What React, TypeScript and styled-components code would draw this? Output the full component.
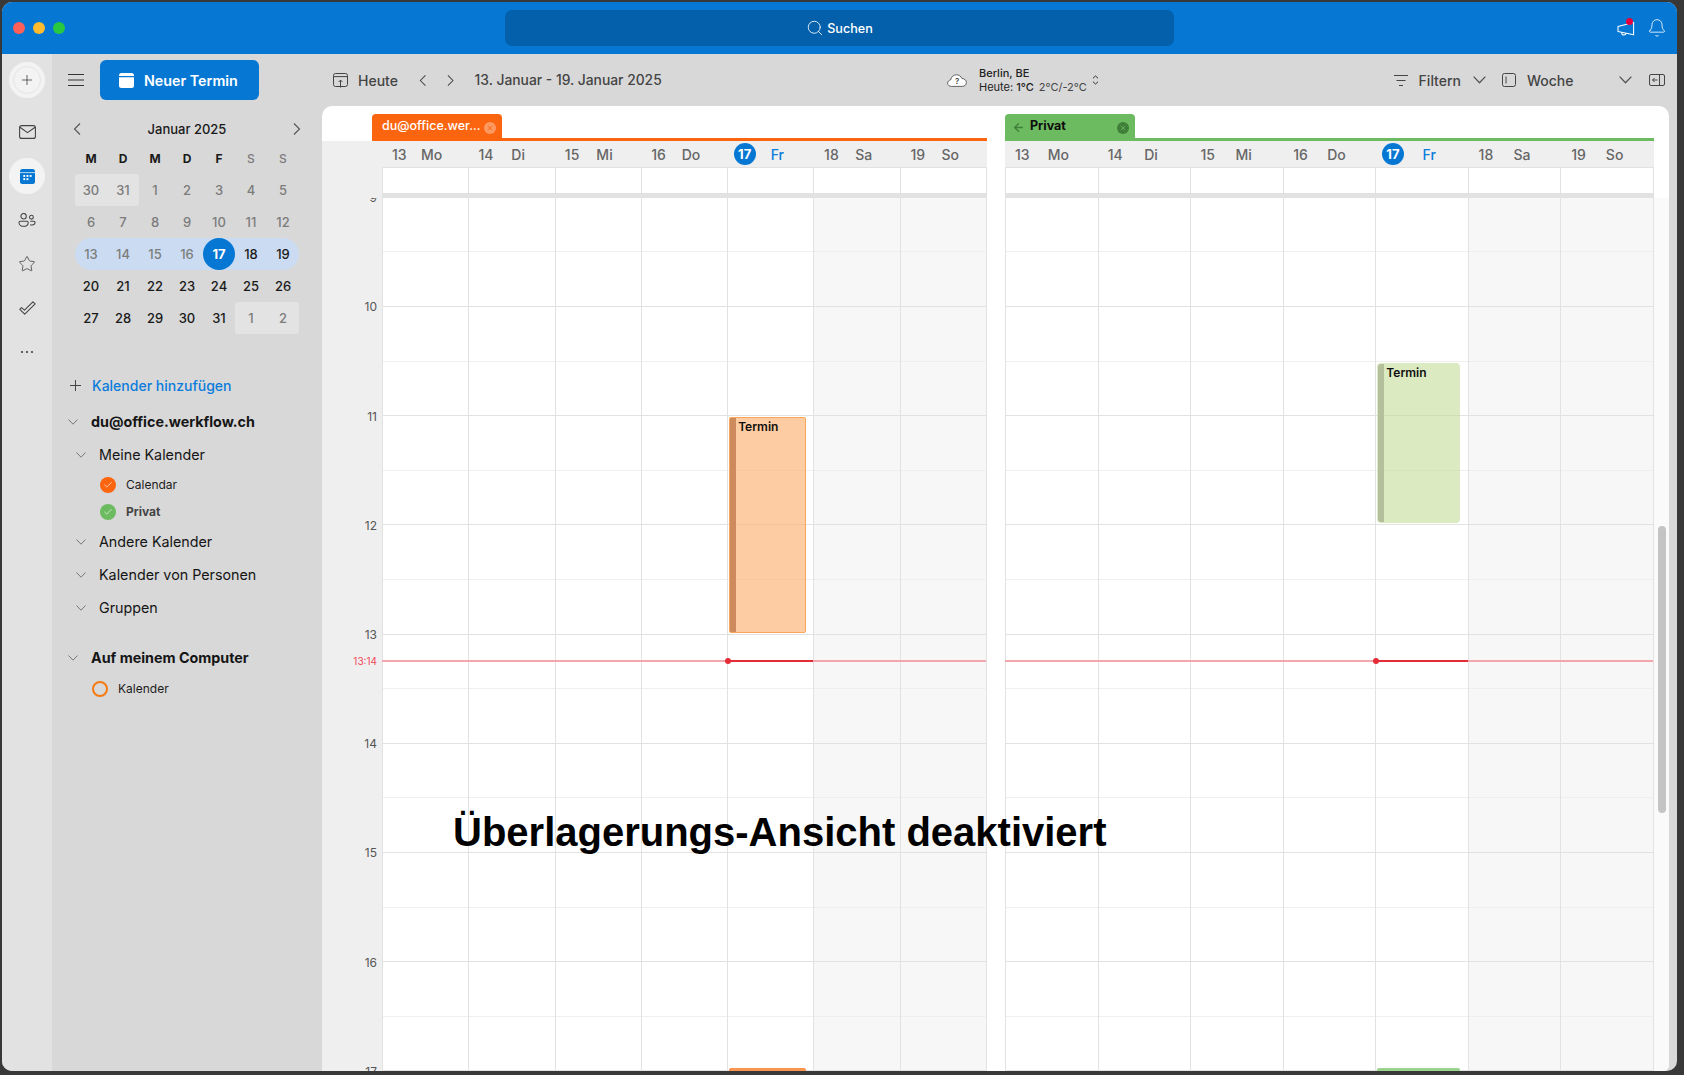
import { Bell, Check, Plus, Search, Star, X, ArrowLeft } from 'lucide-react'
import styled, { createGlobalStyle } from 'styled-components'

const GlobalStyle = createGlobalStyle`
  html, body {
    margin: 0;
    height: 100%;
    background: #383838;
    overflow: hidden;
  }
  body {
    font-family: Inter, "Liberation Sans", sans-serif;
    -webkit-font-smoothing: antialiased;
  }
  * {
    box-sizing: border-box;
  }
`

const Window = styled.div`
  position: relative;
  margin: 2px 0 0 2px;
  width: 1675px;
  height: 1069px;
  border-radius: 10px;
  overflow: hidden;
  display: flex;
  flex-direction: column;
  background: #d8d8d8;
`

const TitleBar = styled.header`
  height: 52px;
  flex-shrink: 0;
  background: #0678d4;
  display: grid;
  grid-template-columns: 503px 669px 1fr;
  align-items: center;
`

const TrafficLights = styled.div`
  display: flex;
  gap: 8px;
  padding-left: 11px;
`

const TrafficDot = styled.span<{ $color: string }>`
  width: 12px;
  height: 12px;
  border-radius: 50%;
  background: ${p => p.$color};
`

const SearchBox = styled.div`
  height: 36px;
  border-radius: 7px;
  background: #0460ab;
  color: #fff;
  display: flex;
  align-items: center;
  justify-content: center;
  gap: 3px;
  font-size: 12.6px;
  font-weight: 500;
`

const TitleActions = styled.div`
  display: flex;
  justify-content: flex-end;
  align-items: center;
  gap: 12px;
  padding-right: 10px;
  color: #fff;
`

const Megaphone = styled.div`
  position: relative;
  width: 18px;
  height: 16px;
  margin-top: 2px;
`

const RedDot = styled.span`
  position: absolute;
  right: 2px;
  top: -3px;
  width: 7px;
  height: 7px;
  border-radius: 50%;
  background: #e8003e;
`

const Body = styled.div`
  flex: 1;
  min-height: 0;
  display: flex;
`

const Rail = styled.nav`
  width: 50px;
  flex-shrink: 0;
  background: #e2e2e2;
  display: flex;
  flex-direction: column;
  align-items: center;
  padding-top: 8px;
  color: #444;
`

const AddButton = styled.div`
  width: 36px;
  height: 36px;
  margin-bottom: 12px;
  border-radius: 50%;
  background: #f3f3f3;
  display: flex;
  align-items: center;
  justify-content: center;
`

const AddInner = styled.div`
  width: 28px;
  height: 28px;
  border-radius: 50%;
  border: 1px solid #e4e4e4;
  display: flex;
  align-items: center;
  justify-content: center;
  color: #333;
`

const RailItem = styled.div<{ $active?: boolean }>`
  width: 44px;
  height: 44px;
  display: flex;
  align-items: center;
  justify-content: center;
  position: relative;

  &::before {
    content: '';
    position: absolute;
    left: 4px;
    top: 4px;
    width: 36px;
    height: 36px;
    border-radius: 50%;
    background: ${p => (p.$active ? '#f3f3f3' : 'transparent')};
  }

  svg {
    position: relative;
  }
`

const Sidebar = styled.aside`
  width: 270px;
  flex-shrink: 0;
  background: #d8d8d8;
`

const SidebarHead = styled.div`
  height: 52px;
  display: flex;
  align-items: center;
  padding: 0 0 0 16px;
  gap: 16px;
  color: #333;
`

const NewButton = styled.div`
  width: 159px;
  height: 40px;
  border-radius: 6px;
  background: #0678d4;
  color: #fff;
  display: flex;
  align-items: center;
  padding-left: 19px;
  gap: 10px;
  font-size: 14.3px;
  font-weight: 600;
`

const MiniCalendar = styled.div`
  margin: 9px 0 0 23px;
  width: 224px;
`

const MonthRow = styled.div`
  height: 27px;
  display: flex;
  align-items: center;
  justify-content: space-between;
  color: #555;
  margin: 0 -2px;
`

const MonthTitle = styled.span`
  font-size: 13px;
  font-weight: 500;
  color: #1a1a1a;
`

const MiniGrid = styled.div`
  display: grid;
  grid-template-columns: repeat(7, 32px);
  grid-auto-rows: 32px;
`

const WeekLetter = styled.div<{ $weekend?: boolean }>`
  display: flex;
  align-items: center;
  justify-content: center;
  font-size: 12px;
  font-weight: ${p => (p.$weekend ? 500 : 700)};
  color: ${p => (p.$weekend ? '#7b7b7b' : '#1a1a1a')};
`

const MiniDay = styled.div<{ $muted?: boolean; $fill?: string; $capStart?: number; $capEnd?: number }>`
  display: flex;
  align-items: center;
  justify-content: center;
  font-size: 13px;
  font-weight: 500;
  color: ${p => (p.$muted ? '#7c7c7c' : '#1a1a1a')};
  background: ${p => p.$fill || 'transparent'};
  border-radius: ${p => `${p.$capStart || 0}px ${p.$capEnd || 0}px ${p.$capEnd || 0}px ${p.$capStart || 0}px`};
`

const TodayDot = styled.span`
  width: 32px;
  height: 32px;
  border-radius: 50%;
  background: #0678d4;
  color: #fff;
  font-weight: 700;
  display: flex;
  align-items: center;
  justify-content: center;
`

const AddCalendar = styled.div`
  height: 32px;
  margin-top: 35px;
  padding-left: 18px;
  display: flex;
  align-items: center;
  gap: 11px;
  color: #444;
`

const AddLabel = styled.span`
  color: #0a7cdc;
  font-size: 14px;
  font-weight: 500;
`

const AccountRow = styled.div<{ $gapTop: number }>`
  height: 33px;
  margin-top: ${p => p.$gapTop}px;
  padding-left: 16px;
  display: flex;
  align-items: center;
  gap: 13px;
  font-size: 14.3px;
  font-weight: 700;
  color: #151515;

  svg {
    color: #777;
  }
`

const GroupRow = styled.div`
  height: 33px;
  padding-left: 24px;
  display: flex;
  align-items: center;
  gap: 13px;
  font-size: 14.3px;
  color: #151515;

  svg {
    color: #777;
  }
`

const CalendarRow = styled.div<{ $indent: number; $bold?: boolean; $gapTop?: number }>`
  height: 27px;
  margin-top: ${p => p.$gapTop || 0}px;
  padding-left: ${p => p.$indent}px;
  display: flex;
  align-items: center;
  gap: 10px;
  font-size: 12px;
  font-weight: ${p => (p.$bold ? 700 : 400)};
  color: ${p => (p.$bold ? '#444' : '#1c1c1c')};
`

const CheckDot = styled.span<{ $color: string }>`
  width: 16px;
  height: 16px;
  border-radius: 50%;
  background: ${p => p.$color};
  color: #fff;
  display: flex;
  align-items: center;
  justify-content: center;
`

const RingDot = styled.span`
  width: 16px;
  height: 16px;
  border-radius: 50%;
  border: 2px solid #f57a12;
`

const Content = styled.main`
  flex: 1;
  min-width: 0;
  display: flex;
  flex-direction: column;
`

const Toolbar = styled.div`
  height: 52px;
  flex-shrink: 0;
  display: flex;
  align-items: center;
  color: #444;
  font-size: 14px;
  font-weight: 500;
`

const ToolbarLeft = styled.div`
  width: 625px;
  padding-left: 11px;
  display: flex;
  align-items: center;
`

const ToolLabel = styled.span<{ $left?: number; $width?: number }>`
  margin-left: ${p => p.$left || 0}px;
  ${p => (p.$width ? `width: ${p.$width}px;` : '')}
`

const DateRange = styled.span`
  font-size: 13.85px;
`

const NavArrows = styled.div`
  display: flex;
  gap: 21px;
  margin: 0 20px 0 21px;
  color: #444;
`

const Weather = styled.div`
  display: flex;
  align-items: center;
`

const WeatherText = styled.div`
  margin: 0 5px 0 12px;
  font-size: 11px;
  line-height: 14px;
  color: #222;
  font-weight: 500;
`

const WeatherLine = styled.span`
  font-weight: 400;
`

const WeatherNow = styled.b`
  font-weight: 500;
`

const WeatherRange = styled.span`
  margin-left: 5px;
  color: #444;
  font-weight: 400;
`

const ToolbarRight = styled.div`
  margin-left: auto;
  padding-right: 12px;
  display: flex;
  align-items: center;
`

const ToolChevron = styled.span<{ $left: number }>`
  display: flex;
  margin-left: ${p => p.$left}px;
  color: #555;
`

const ToolIcon = styled.span<{ $left?: number }>`
  display: flex;
  margin-left: ${p => p.$left || 0}px;
`

const Panel = styled.section`
  position: relative;
  flex: 1;
  min-height: 0;
  margin-right: 8px;
  background: #fff;
  border-radius: 10px 10px 6px 0;
  overflow: hidden;
  display: flex;
`

const Gutter = styled.div`
  width: 60px;
  flex-shrink: 0;
  margin-top: 35px;
  background: #efefef;
  display: flex;
  flex-direction: column;
`

const GutterHead = styled.div`
  height: 57px;
  flex-shrink: 0;
`

const GutterScale = styled.div`
  position: relative;
  flex: 1;
  overflow: hidden;
`

const HourStack = styled.div`
  margin-top: -54.8px;
`

const HourLabel = styled.div`
  height: 109.2px;
  display: flex;
  align-items: center;
  justify-content: flex-end;
  padding-right: 5px;
  font-size: 12px;
  color: #555;
`

const NowLabel = styled.span`
  position: absolute;
  right: 5px;
  top: 456px;
  font-size: 10px;
  line-height: 14px;
  color: #ef4a5a;
`

const Pane = styled.div<{ $width: number; $gap?: number }>`
  width: ${p => p.$width}px;
  flex-shrink: 0;
  margin-left: ${p => p.$gap || 0}px;
  display: flex;
  flex-direction: column;
  min-height: 0;
`

const TabLine = styled.div<{ $color: string; $outdent?: number }>`
  height: 35px;
  flex-shrink: 0;
  margin-left: ${p => -(p.$outdent || 0)}px;
  border-bottom: 3px solid ${p => p.$color};
  display: flex;
  align-items: flex-end;
`

const Tab = styled.div<{ $color: string; $dark?: boolean }>`
  width: 130px;
  height: 27px;
  margin-bottom: -3px;
  border-radius: 4px 4px 0 0;
  background: ${p => p.$color};
  color: ${p => (p.$dark ? '#0d0d0d' : '#fff')};
  display: flex;
  align-items: center;
  padding: 0 6px 4px ${p => (p.$dark ? '7px' : '10px')};
  font-size: 12.5px;
  font-weight: ${p => (p.$dark ? 700 : 500)};
`

const TabTitle = styled.span`
  flex: 1;
  white-space: nowrap;
`

const TabClose = styled.span<{ $color: string; $ink: string }>`
  width: 12px;
  height: 12px;
  margin-top: 5px;
  border-radius: 50%;
  background: ${p => p.$color};
  color: ${p => p.$ink};
  display: flex;
  align-items: center;
  justify-content: center;
`

const BackArrow = styled.span`
  display: flex;
  margin-right: 5px;
  margin-top: 4px;
  color: #3f7f39;
`

const DayHeaders = styled.div`
  height: 27px;
  flex-shrink: 0;
  background: #efefef;
  border-bottom: 1px solid #e2e2e2;
  display: flex;
`

const DayHeader = styled.div`
  flex: 1 1 0;
  display: grid;
  grid-template-columns: 40% 35%;
  align-items: center;
  font-size: 14px;
  font-weight: 500;
  color: #666;
`

const DayNumber = styled.span`
  padding-left: 10px;
`

const DayName = styled.span<{ $today?: boolean }>`
  text-align: center;
  color: ${p => (p.$today ? '#0a7cdc' : '#666')};
`

const TodayBadge = styled.span`
  width: 22px;
  height: 22px;
  margin-left: 6px;
  border-radius: 50%;
  background: #0678d4;
  color: #fff;
  font-size: 13px;
  font-weight: 700;
  display: flex;
  align-items: center;
  justify-content: center;
`

const AllDayRow = styled.div`
  height: 25px;
  flex-shrink: 0;
  display: flex;
  border-right: 1px solid #e2e2e2;
`

const AllDayCell = styled.div`
  flex: 1 1 0;
  border-left: 1px solid #e2e2e2;
`

const AllDayDivider = styled.div`
  height: 5px;
  flex-shrink: 0;
  background: #e2e2e2;
`

const Grid = styled.div`
  position: relative;
  flex: 1;
  min-height: 0;
  overflow: hidden;
  display: flex;
  border-right: 1px solid #e2e2e2;
`

const DayColumn = styled.div<{ $weekend?: boolean }>`
  position: relative;
  flex: 1 1 0;
  background: ${p => (p.$weekend ? '#f7f7f7' : '#fff')};
  border-left: 1px solid #e2e2e2;
`

const Slot = styled.div<{ $hour: boolean; $first?: boolean }>`
  height: ${p => (p.$first ? '54.4px' : '54.6px')};
  border-bottom: 1px solid ${p => (p.$hour ? '#e2e2e2' : '#efefef')};
`

const NowLine = styled.div`
  position: absolute;
  left: 0;
  right: 0;
  top: 462px;
  height: 2px;
  background: #f2a7ae;
  z-index: 1;
`

const NowSegment = styled.div`
  position: absolute;
  left: 0;
  right: 0;
  top: 462px;
  height: 2px;
  background: #e42c39;
  z-index: 3;

  &::before {
    content: '';
    position: absolute;
    left: -3px;
    top: -2px;
    width: 6px;
    height: 6px;
    border-radius: 50%;
    background: #e42c39;
  }
`

const EventCard = styled.div<{ $top: number; $height: number; $width: number; $tone: 'orange' | 'green' }>`
  position: absolute;
  z-index: 2;
  left: 1px;
  top: ${p => p.$top}px;
  width: ${p => p.$width}px;
  height: ${p => p.$height}px;
  border-radius: ${p => (p.$tone === 'orange' ? '2px' : '4px')};
  overflow: hidden;
  background: ${p => (p.$tone === 'orange' ? 'rgba(252, 177, 112, 0.65)' : 'rgba(195, 220, 150, 0.6)')};
  border: 1px solid ${p => (p.$tone === 'orange' ? '#f9a65c' : 'transparent')};
  display: flex;
  font-size: 12px;
  font-weight: 600;
  color: #0f0f0f;
`

const EventStripe = styled.span<{ $tone: 'orange' | 'green' }>`
  width: 6px;
  flex-shrink: 0;
  background: ${p => (p.$tone === 'orange' ? '#cd8a5c' : '#b4c09b')};
`

const EventTitle = styled.span`
  padding: 1px 0 0 2px;
`

const EventStub = styled.div<{ $width: number; $color: string }>`
  position: absolute;
  z-index: 2;
  left: 1px;
  top: 870px;
  width: ${p => p.$width}px;
  height: 10px;
  background: ${p => p.$color};
  border-radius: 2px 2px 0 0;
`

const ScrollArea = styled.div`
  flex: 1;
  margin-top: 92px;
  background: #fafafa;
  padding: 328px 3px 0 4px;
`

const ScrollThumb = styled.div`
  height: 287px;
  border-radius: 4px;
  background: #c4c4c4;
`

const Caption = styled.div`
  position: absolute;
  z-index: 5;
  left: 131px;
  top: 702px;
  font-family: "Liberation Sans", Arial, sans-serif;
  font-size: 40px;
  line-height: 48px;
  font-weight: 700;
  color: #000;
  white-space: nowrap;
`

const weekLetters = ['M', 'D', 'M', 'D', 'F', 'S', 'S']

const weekDays = [
  { num: 13, name: 'Mo' },
  { num: 14, name: 'Di' },
  { num: 15, name: 'Mi' },
  { num: 16, name: 'Do' },
  { num: 17, name: 'Fr', today: true },
  { num: 18, name: 'Sa' },
  { num: 19, name: 'So' }
]

const hours = [9, 10, 11, 12, 13, 14, 15, 16, 17]

interface MiniCell {
  day: number
  muted?: boolean
  fill?: string
  capStart?: number
  capEnd?: number
  today?: boolean
}

const BOX = '#e3e3e3'
const RANGE = '#cbdcf2'

const miniDays: MiniCell[] = [
  { day: 30, muted: true, fill: BOX, capStart: 3 },
  { day: 31, muted: true, fill: BOX, capEnd: 3 },
  ...[1, 2, 3, 4, 5, 6, 7, 8, 9, 10, 11, 12].map(day => ({ day, muted: true })),
  { day: 13, muted: true, fill: RANGE, capStart: 16 },
  { day: 14, muted: true, fill: RANGE },
  { day: 15, muted: true, fill: RANGE },
  { day: 16, muted: true, fill: RANGE },
  { day: 17, fill: RANGE, today: true },
  { day: 18, fill: RANGE },
  { day: 19, fill: RANGE, capEnd: 16 },
  ...[20, 21, 22, 23, 24, 25, 26, 27, 28, 29, 30, 31].map(day => ({ day })),
  { day: 1, muted: true, fill: BOX, capStart: 3 },
  { day: 2, muted: true, fill: BOX, capEnd: 3 }
]

const slots = Array.from({ length: 16 }, (_, i) => i)

const MenuIcon = () => (
  <svg width="16" height="12" viewBox="0 0 16 12" fill="none" stroke="currentColor" strokeWidth="1">
    <path d="M0 .5h16M0 6h16M0 11.500h16" />
  </svg>
)

const MailIcon = () => (
  <svg width="17" height="14" viewBox="0 0 17 14" fill="none" stroke="currentColor" strokeWidth="1.1">
    <rect x=".6" y=".6" width="15.8" height="12.800" rx="2" />
    <path d="M.9 2.200 8.500 7.600l7.600-5.400" />
  </svg>
)

const CalendarActiveIcon = () => (
  <svg width="15" height="15" viewBox="0 0 15 15">
    <rect width="15" height="15" rx="2.500" fill="#0678d4" />
    <path d="M0 3.600h15" stroke="#fff" strokeWidth=".7" />
    <g fill="#fff">
      <rect x="3.300" y="6" width="1.900" height="1.900" />
      <rect x="6.500" y="6" width="1.900" height="1.900" />
      <rect x="9.700" y="6" width="1.900" height="1.900" />
      <rect x="3.300" y="9.200" width="1.900" height="1.900" />
      <rect x="6.500" y="9.200" width="1.900" height="1.900" />
    </g>
  </svg>
)

const PeopleIcon = () => (
  <svg width="18" height="14" viewBox="0 0 18 14" fill="none" stroke="currentColor" strokeWidth="1.05">
    <circle cx="5.600" cy="3.200" r="2.700" />
    <circle cx="13.400" cy="4.200" r="1.900" />
    <path d="M1 9.400c0-.7.600-1.200 1.200-1.200h6.800c.7 0 1.200.5 1.200 1.200 0 2.400-2 3.900-4.600 3.900S1 11.800 1 9.400Z" />
    <path d="M12.200 8.200h3.600c.7 0 1.200.5 1.200 1.100 0 1.700-1.400 2.700-3.200 2.700-.6 0-1.200-.1-1.700-.3" />
  </svg>
)

const TasksIcon = () => (
  <svg width="17" height="14" viewBox="0 0 17 14" fill="none" stroke="currentColor" strokeWidth="1.05" strokeLinejoin="round">
    <path d="M.8 8.400 2.500 6.600l3 2.600L13.900.8l2.300 2.100L5.700 13.200.8 8.400Z" />
  </svg>
)

const DotsIcon = () => (
  <svg width="14" height="4" viewBox="0 0 14 4" fill="currentColor">
    <circle cx="2" cy="2" r="1.100" />
    <circle cx="7" cy="2" r="1.100" />
    <circle cx="12" cy="2" r="1.100" />
  </svg>
)

const NewEventIcon = () => (
  <svg width="15" height="15" viewBox="0 0 15 15" fill="#fff">
    <path d="M2.500 0h10A2.500 2.500 0 0 1 15 2.500V3H0v-.5A2.500 2.500 0 0 1 2.500 0Z" />
    <path d="M0 4.200h15v8.300a2.500 2.500 0 0 1-2.500 2.500h-10A2.500 2.500 0 0 1 0 12.500V4.200Z" />
  </svg>
)

const MegaphoneIcon = () => (
  <svg width="18" height="16" viewBox="0 0 18 16" fill="none" stroke="currentColor" strokeWidth="1.05" strokeLinejoin="round">
    <path d="M1 5.600 16.600 1.400v12.400L1 10.400V5.600Z" />
    <path d="M4.600 11.400c0 1.600 1 2.600 2.300 2.600 1.200 0 2.100-.8 2.300-1.900" />
  </svg>
)

const TodayIcon = () => (
  <svg width="15" height="15" viewBox="0 0 15 15" fill="none" stroke="currentColor" strokeWidth="1">
    <rect x=".5" y=".5" width="14" height="13" rx="2" />
    <path d="M.5 3.600h14M7.500 14.500V7.200M5.600 9l1.900-1.900L9.400 9" />
  </svg>
)

const FilterIcon = () => (
  <svg width="14" height="11" viewBox="0 0 14 11" fill="none" stroke="currentColor" strokeWidth="1">
    <path d="M0 .5h14M2.500 5.500h9M5 10.500h4" />
  </svg>
)

const WeekIcon = () => (
  <svg width="14" height="14" viewBox="0 0 14 14" fill="none" stroke="currentColor" strokeWidth="1">
    <rect x=".5" y=".5" width="13" height="13" rx="2" />
    <path d="M4 3.500v7" />
  </svg>
)

const SidePanelIcon = () => (
  <svg width="16" height="12" viewBox="0 0 16 12" fill="none" stroke="currentColor" strokeWidth="1">
    <rect x=".5" y=".5" width="15" height="11" rx="1.500" />
    <path d="M10.500 .5v11M8.500 6H3.500M5.500 4 3.500 6l2 2" />
  </svg>
)

const CloudIcon = () => (
  <svg width="20" height="13" viewBox="0 0 20 13">
    <path
      d="M4.400 12.400C2.300 12.400.6 11 .6 9.200c0-1.700 1.300-3 3-3.200C4 3.100 6.500.8 9.500.8c2.500 0 4.600 1.500 5.400 3.700 2.500 0 4.500 1.700 4.500 4 0 2.200-1.800 3.900-4.100 3.900H4.400Z"
      fill="#fff"
      stroke="#555"
      strokeWidth=".9"
    />
    <text x="10" y="10" textAnchor="middle" fontSize="8" fill="#333" fontFamily="Inter, sans-serif">
      ?
    </text>
  </svg>
)

const UpDownIcon = () => (
  <svg width="7" height="10" viewBox="0 0 7 10" fill="none" stroke="#333" strokeWidth="1">
    <path d="M1 3.200 3.500 1 6 3.200M1 6.800 3.500 9 6 6.800" />
  </svg>
)

const AddPlusIcon = () => (
  <svg width="11" height="11" viewBox="0 0 11 11" fill="none" stroke="currentColor" strokeWidth="1">
    <path d="M5.500 0v11M0 5.500h11" />
  </svg>
)

const SideChevron = ({ back, size = 12 }: { back?: boolean; size?: number }) => (
  <svg width={(size * 2) / 3} height={size} viewBox="0 0 8 12" fill="none" stroke="currentColor" strokeWidth="1.100">
    <path d={back ? 'M7 .5 1.500 6 7 11.500' : 'M1 .5 6.500 6 1 11.500'} />
  </svg>
)

const DownChevron = ({ width = 10 }: { width?: number }) => (
  <svg width={width} height={width * 0.6} viewBox="0 0 10 6" fill="none" stroke="currentColor" strokeWidth="1">
    <path d="M.5 .5 5 5.200 9.500 .5" />
  </svg>
)

function PaneColumns({ todayEvent, stubWidth, stubColor }: { todayEvent: React.ReactNode; stubWidth: number; stubColor: string }) {
  return (
    <Grid>
      {weekDays.map(d => (
        <DayColumn key={d.num} $weekend={d.num > 17}>
          {slots.map(i => (
            <Slot key={i} $first={i === 0} $hour={i % 2 === 1} />
          ))}
          {d.today && (
            <>
              {todayEvent}
              <EventStub $width={stubWidth} $color={stubColor} />
              <NowSegment />
            </>
          )}
        </DayColumn>
      ))}
      <NowLine />
    </Grid>
  )
}

function PaneHeader() {
  return (
    <>
      <DayHeaders>
        {weekDays.map(d => (
          <DayHeader key={d.num}>
            {d.today ? <TodayBadge>{d.num}</TodayBadge> : <DayNumber>{d.num}</DayNumber>}
            <DayName $today={d.today}>{d.name}</DayName>
          </DayHeader>
        ))}
      </DayHeaders>
      <AllDayRow>
        {weekDays.map(d => (
          <AllDayCell key={d.num} />
        ))}
      </AllDayRow>
      <AllDayDivider />
    </>
  )
}

function App() {
  return (
    <>
      <GlobalStyle />
      <Window>
        <TitleBar>
          <TrafficLights>
            <TrafficDot $color="#fe5f57" />
            <TrafficDot $color="#febc2e" />
            <TrafficDot $color="#28c840" />
          </TrafficLights>
          <SearchBox>
            <Search size={18} strokeWidth={1.1} />
            Suchen
          </SearchBox>
          <TitleActions>
            <Megaphone>
              <MegaphoneIcon />
              <RedDot />
            </Megaphone>
            <Bell size={20} strokeWidth={1} />
          </TitleActions>
        </TitleBar>

        <Body>
          <Rail>
            <AddButton>
              <AddInner>
                <Plus size={16} strokeWidth={1.1} />
              </AddInner>
            </AddButton>
            <RailItem><MailIcon /></RailItem>
            <RailItem $active><CalendarActiveIcon /></RailItem>
            <RailItem><PeopleIcon /></RailItem>
            <RailItem><Star size={18} strokeWidth={1.1} /></RailItem>
            <RailItem><TasksIcon /></RailItem>
            <RailItem><DotsIcon /></RailItem>
          </Rail>

          <Sidebar>
            <SidebarHead>
              <MenuIcon />
              <NewButton>
                <NewEventIcon />
                Neuer Termin
              </NewButton>
            </SidebarHead>

            <MiniCalendar>
              <MonthRow>
                <SideChevron back />
                <MonthTitle>Januar 2025</MonthTitle>
                <SideChevron />
              </MonthRow>
              <MiniGrid>
                {weekLetters.map((l, i) => (
                  <WeekLetter key={i} $weekend={i > 4}>{l}</WeekLetter>
                ))}
                {miniDays.map((c, i) => (
                  <MiniDay key={i} $muted={c.muted} $fill={c.fill} $capStart={c.capStart} $capEnd={c.capEnd}>
                    {c.today ? <TodayDot>{c.day}</TodayDot> : c.day}
                  </MiniDay>
                ))}
              </MiniGrid>
            </MiniCalendar>

            <AddCalendar>
              <AddPlusIcon />
              <AddLabel>Kalender hinzufügen</AddLabel>
            </AddCalendar>

            <AccountRow $gapTop={4}>
              <DownChevron />
              du@office.werkflow.ch
            </AccountRow>
            <GroupRow>
              <DownChevron />
              Meine Kalender
            </GroupRow>
            <CalendarRow $indent={48}>
              <CheckDot $color="#fc650f"><Check size={10} strokeWidth={1.5} /></CheckDot>
              Calendar
            </CalendarRow>
            <CalendarRow $indent={48} $bold>
              <CheckDot $color="#6dbb60"><Check size={10} strokeWidth={1.5} /></CheckDot>
              Privat
            </CalendarRow>
            <GroupRow>
              <DownChevron />
              Andere Kalender
            </GroupRow>
            <GroupRow>
              <DownChevron />
              Kalender von Personen
            </GroupRow>
            <GroupRow>
              <DownChevron />
              Gruppen
            </GroupRow>
            <AccountRow $gapTop={17}>
              <DownChevron />
              Auf meinem Computer
            </AccountRow>
            <CalendarRow $indent={40} $gapTop={1}>
              <RingDot />
              Kalender
            </CalendarRow>
          </Sidebar>

          <Content>
            <Toolbar>
              <ToolbarLeft>
                <TodayIcon />
                <ToolLabel $left={10}>Heute</ToolLabel>
                <NavArrows>
                  <SideChevron back size={11} />
                  <SideChevron size={11} />
                </NavArrows>
                <DateRange>13. Januar - 19. Januar 2025</DateRange>
              </ToolbarLeft>
              <Weather>
                <CloudIcon />
                <WeatherText>
                  Berlin, BE
                  <br />
                  <WeatherLine>Heute: </WeatherLine>
                  <WeatherNow>1°C</WeatherNow>
                  <WeatherRange>2°C/-2°C</WeatherRange>
                </WeatherText>
                <UpDownIcon />
              </Weather>
              <ToolbarRight>
                <FilterIcon />
                <ToolLabel $left={11}>Filtern</ToolLabel>
                <ToolChevron $left={12}><DownChevron width={13} /></ToolChevron>
                <ToolIcon $left={16}><WeekIcon /></ToolIcon>
                <ToolLabel $left={11} $width={47}>Woche</ToolLabel>
                <ToolChevron $left={45}><DownChevron width={13} /></ToolChevron>
                <ToolIcon $left={17}><SidePanelIcon /></ToolIcon>
              </ToolbarRight>
            </Toolbar>

            <Panel>
              <Gutter>
                <GutterHead />
                <GutterScale>
                  <HourStack>
                    {hours.map(h => (
                      <HourLabel key={h}>{h}</HourLabel>
                    ))}
                  </HourStack>
                  <NowLabel>13:14</NowLabel>
                </GutterScale>
              </Gutter>

              <Pane $width={605}>
                <TabLine $color="#fc650f" $outdent={10}>
                  <Tab $color="#fc650f">
                    <TabTitle>du@office.wer...</TabTitle>
                    <TabClose $color="#fd9a63" $ink="#fc650f"><X size={8} strokeWidth={2.5} /></TabClose>
                  </Tab>
                </TabLine>
                <PaneHeader />
                <PaneColumns
                  stubWidth={77}
                  stubColor="#fb9450"
                  todayEvent={
                    <EventCard $top={219} $height={216} $width={77} $tone="orange">
                      <EventStripe $tone="orange" />
                      <EventTitle>Termin</EventTitle>
                    </EventCard>
                  }
                />
              </Pane>

              <Pane $width={649} $gap={18}>
                <TabLine $color="#6dbb60">
                  <Tab $color="#6dbb60" $dark>
                    <BackArrow><ArrowLeft size={13} strokeWidth={2.5} /></BackArrow>
                    <TabTitle>Privat</TabTitle>
                    <TabClose $color="#3f7f39" $ink="#6dbb60"><X size={8} strokeWidth={2.5} /></TabClose>
                  </Tab>
                </TabLine>
                <PaneHeader />
                <PaneColumns
                  stubWidth={83}
                  stubColor="#9ad38e"
                  todayEvent={
                    <EventCard $top={165} $height={160} $width={83} $tone="green">
                      <EventStripe $tone="green" />
                      <EventTitle>Termin</EventTitle>
                    </EventCard>
                  }
                />
              </Pane>

              <ScrollArea>
                <ScrollThumb />
              </ScrollArea>

              <Caption>Überlagerungs-Ansicht deaktiviert</Caption>
            </Panel>
          </Content>
        </Body>
      </Window>
    </>
  )
}

export default App
